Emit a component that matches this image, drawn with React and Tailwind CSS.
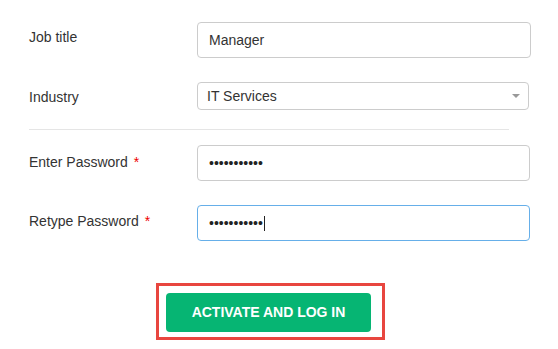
import React from "react";

function Row({ label, required, children, className = "", labelClass = "" }) {
  return (
    <div className={`flex items-center ${className}`}>
      <div className={`w-[168px] text-[14px] text-[#333] ${labelClass}`}>
        {label}
        {required && <span className="text-[#e00] ml-[6px]">*</span>}
      </div>
      {children}
    </div>
  );
}

function Dots({ caret }) {
  return (
    <div className="flex items-center h-full px-[11px] text-[14px] text-[#222]">
      <span>•••••••••••</span>
      {caret && <span className="w-px h-[15px] bg-[#222] ml-px" />}
    </div>
  );
}

export default function App() {
  return (
    <div
      className="w-[558px] h-[349px] bg-white pt-[22px] pl-[29px]"
      style={{ fontFamily: '"Liberation Sans", Arial, sans-serif' }}
    >
      <Row label="Job title" labelClass="-mt-[5px]">
        <div className="w-[334px] h-[36px] border border-[#ccc] rounded-[4px] px-[11px] flex items-center text-[14px] text-[#333]">
          Manager
        </div>
      </Row>

      <Row label="Industry" className="mt-[24px]" labelClass="mt-[2px]">
        <div className="w-[332px] h-[28px] border border-[#ccc] rounded-[4px] pl-[9px] pr-[8px] flex items-center justify-between text-[14px] text-[#333]">
          <span>IT Services</span>
          <svg width="8" height="4" viewBox="0 0 8 4">
            <path d="M0 0h8L4 4z" fill="#999" />
          </svg>
        </div>
      </Row>

      <div className="w-[480px] h-px bg-[#e5e5e5] mt-[19px]" />

      <Row label="Enter Password" required className="mt-[15px]" labelClass="-mt-[2px]">
        <div className="w-[333px] h-[36px] border border-[#ccc] rounded-[4px]">
          <Dots />
        </div>
      </Row>

      <Row label="Retype Password" required className="mt-[24px]" labelClass="-mt-[3px]">
        <div className="w-[333px] h-[36px] border border-[#66afe9] rounded-[4px]">
          <Dots caret />
        </div>
      </Row>

      <div className="mt-[42px] ml-[127px] w-fit border-[3px] border-[#e8463f] pl-[7px] pr-[11px] pt-[7px] pb-[5px]">
        <button className="w-[205px] h-[39px] bg-[#06b573] rounded-[4px] text-white font-bold text-[14px]">
          ACTIVATE AND LOG IN
        </button>
      </div>
    </div>
  );
}
